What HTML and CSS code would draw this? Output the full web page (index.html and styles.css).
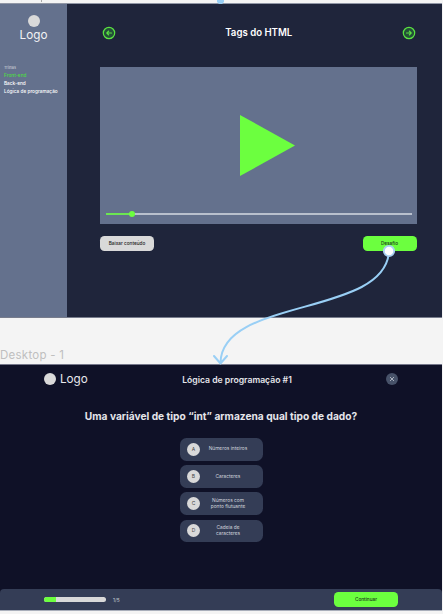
FILE: index.html
```
<!DOCTYPE html>
<html lang="pt-BR">
<head>
<meta charset="utf-8">
<title>Tags do HTML</title>
<link rel="stylesheet" href="styles.css">
</head>
<body>
<main class="canvas">
  <section class="frame lesson">
    <aside class="sidebar">
      <div class="brand"><span class="brand-dot"></span><span class="brand-name">Logo</span></div>
      <nav class="tracks">
        <span class="tracks-title">Trilhas</span>
        <a class="track active">Front-end</a>
        <a class="track">Back-end</a>
        <a class="track">Lógica de programação</a>
      </nav>
    </aside>
    <div class="content">
      <header class="lesson-header">
        <svg class="arrow" viewBox="0 0 14 14"><circle cx="7" cy="7" r="5.7"/><path d="M9.500 7H4.800M6.600 5.200L4.800 7l1.800 1.800"/></svg>
        <h1 class="lesson-title">Tags do HTML</h1>
        <svg class="arrow" viewBox="0 0 14 14"><circle cx="7" cy="7" r="5.7"/><path d="M4.500 7h4.700M7.400 5.200L9.200 7l-1.800 1.800"/></svg>
      </header>
      <div class="video">
        <svg class="play" viewBox="0 0 55 61"><path d="M0 0L55 30.500L0 61z"/></svg>
        <div class="timeline"><div class="played"></div><span class="knob"></span></div>
      </div>
      <div class="actions">
        <button class="button light">Baixar conteúdo</button>
        <button class="button">Desafio</button>
      </div>
    </div>
  </section>

  <div class="frame-label">Desktop - 1</div>

  <section class="frame quiz">
    <header class="quiz-header">
      <div class="quiz-brand"><span class="brand-dot"></span><span class="quiz-brand-name">Logo</span></div>
      <h2 class="quiz-title">Lógica de programação #1</h2>
      <svg class="close" viewBox="0 0 12 12"><circle cx="6" cy="6" r="6"/><path d="M4 4l4 4M8 4l-4 4"/></svg>
    </header>
    <h3 class="question">Uma variável de tipo “int” armazena qual tipo de dado?</h3>
    <div class="answers">
      <div class="answer"><span class="letter">A</span><span class="answer-text">Números inteiros</span></div>
      <div class="answer"><span class="letter">B</span><span class="answer-text">Caracteres</span></div>
      <div class="answer"><span class="letter">C</span><span class="answer-text">Números com<br>ponto flutuante</span></div>
      <div class="answer"><span class="letter">D</span><span class="answer-text">Cadeia de<br>caracteres</span></div>
    </div>
    <footer class="quiz-footer">
      <div class="progress"><div class="progress-fill"></div></div>
      <span class="count">1/5</span>
      <button class="button continue">Continuar</button>
    </footer>
  </section>

  <svg class="connector" viewBox="0 0 443 614">
    <path class="incoming" d="M217 0h7v2l-2 2h-3l-2-2z"/>
    <path class="tick" d="M41.500 0v2"/>
    <path class="wire" d="M389 251C386 317 221 297 220.500 363M214 356l6.500 7.500l6.500-7.500"/>
    <circle cx="389" cy="251" r="5.200"/>
  </svg>
</main>
</body>
</html>
```
FILE: styles.css
```
* { box-sizing: border-box; }
body { margin: 0; background: #f4f4f4; font-family: Inter, sans-serif; }
h1, h2, h3 { margin: 0; white-space: nowrap; }
.canvas { position: relative; width: 443px; height: 614px; padding-top: 3px; overflow: hidden; }
.frame { width: 442px; }
.lesson { display: flex; height: 315px; background: #1f253b; border-top: 1px solid #9096a5; border-bottom: 1px solid #777c8c; }
.sidebar { width: 67px; background: #64718d; }
.brand { display: flex; flex-direction: column; align-items: center; padding-top: 10.500px; }
.brand-dot { width: 12px; height: 12px; border-radius: 50%; background: #d9d9d9; }
.brand-name { font-size: 11.700px; line-height: 16px; color: #f2f2f4; }
.tracks { display: flex; flex-direction: column; padding: 21px 0 0 4px; font-size: 4.750px; line-height: 8.200px; color: #fff; white-space: nowrap; font-weight: 500; }
.tracks-title { font-size: 3.800px; color: #d5d8df; font-weight: 400; line-height: 7px; }
.active { color: #4ddd43; }
.content { display: flex; flex-direction: column; width: 375px; padding: 22px 25.500px 0 33px; }
.lesson-header { display: flex; align-items: center; justify-content: space-between; height: 14px; padding: 0 .5px 0 1.500px; }
.lesson-title { font-size: 9.650px; line-height: 14px; font-weight: 600; color: #fff; }
.arrow { width: 14px; height: 14px; fill: #245039; stroke: #5be441; stroke-width: 1.200; stroke-linecap: round; stroke-linejoin: round; }
.video { display: flex; flex-direction: column; align-items: center; height: 157.500px; margin-top: 26.500px; padding-top: 48.500px; background: #64718d; }
.play { width: 55px; height: 61px; margin-left: 17.500px; fill: #6cff3f; }
.timeline { display: flex; align-items: center; width: 306px; height: 6px; margin: 35px 0 0 2px; background: linear-gradient(#b9c0cd, #b9c0cd) center / 100% 2px no-repeat; }
.played { width: 23px; height: 2px; background: #6ce552; }
.knob { width: 6px; height: 6px; border-radius: 50%; background: #6cff3f; }
.actions { display: flex; justify-content: space-between; margin-top: 11.500px; }
.button { width: 54px; height: 15.500px; padding: 0; border: 0; border-radius: 4.500px; background: #6cff3f; font: 500 4.700px/15px Inter, sans-serif; color: #17351b; white-space: nowrap; }
.light { background: #d9d9d9; color: #202020; }
.frame-label { height: 46px; padding-top: 29px; font-size: 11.500px; line-height: 16px; color: #bfbfbf; white-space: nowrap; letter-spacing: .25px; }
.quiz { display: flex; flex-direction: column; height: 247px; background: #0f1127; border-top: 1px solid #75778a; border-bottom: 1px solid #a9afbb; }
.quiz-header { display: grid; grid-template-columns: 100px 1fr 68px; align-items: center; height: 27px; padding: 0 44px; }
.quiz-brand { display: flex; align-items: center; gap: 4px; }
.quiz-brand-name { font-size: 11.700px; line-height: 16px; color: #e8e8ed; }
.quiz-title { padding-top: 2px; text-align: center; font-size: 8.650px; font-weight: 600; color: #e5e5ea; }
.close { justify-self: end; width: 12px; height: 12px; fill: #475269; }
.close path { stroke: #c4cad4; stroke-width: .8; }
.question { margin-top: 16px; text-align: center; font-size: 10.200px; line-height: 16px; font-weight: 700; color: #e5e5ea; }
.answers { display: flex; flex-direction: column; gap: 4.500px; width: 83px; margin: 14px 0 0 180px; }
.answer { display: flex; align-items: center; height: 22.700px; padding-left: 7px; border-radius: 6.500px; background: #343d56; color: #d3d6de; font-size: 4.800px; line-height: 5.800px; }
.letter { width: 13px; height: 13px; border-radius: 50%; background: #d9d9d9; color: #444; text-align: center; font-size: 5px; line-height: 13px; }
.answer-text { width: 56px; text-align: center; white-space: nowrap; }
.quiz-footer { display: flex; align-items: center; height: 21px; margin-top: auto; padding: 0 44px; background: #343d56; border-radius: 4px 4px 0 0; }
.progress { width: 62px; height: 5px; border-radius: 3px; overflow: hidden; background: #d9d9d9; }
.progress-fill { width: 12px; height: 5px; background: #6cff3f; }
.count { margin-left: 7px; font-size: 4.800px; color: #cbd0da; }
.continue { width: 64px; margin-left: auto; }
.connector { position: absolute; inset: 0; width: 443px; height: 614px; fill: none; }
.wire { stroke: #99cff5; stroke-width: 2; stroke-linecap: round; stroke-linejoin: round; }
.incoming { fill: #99cff5; }
.tick { stroke: #aaa; }
.connector circle { fill: #fff; stroke: #a9d0f2; stroke-width: 1.800; }
```
